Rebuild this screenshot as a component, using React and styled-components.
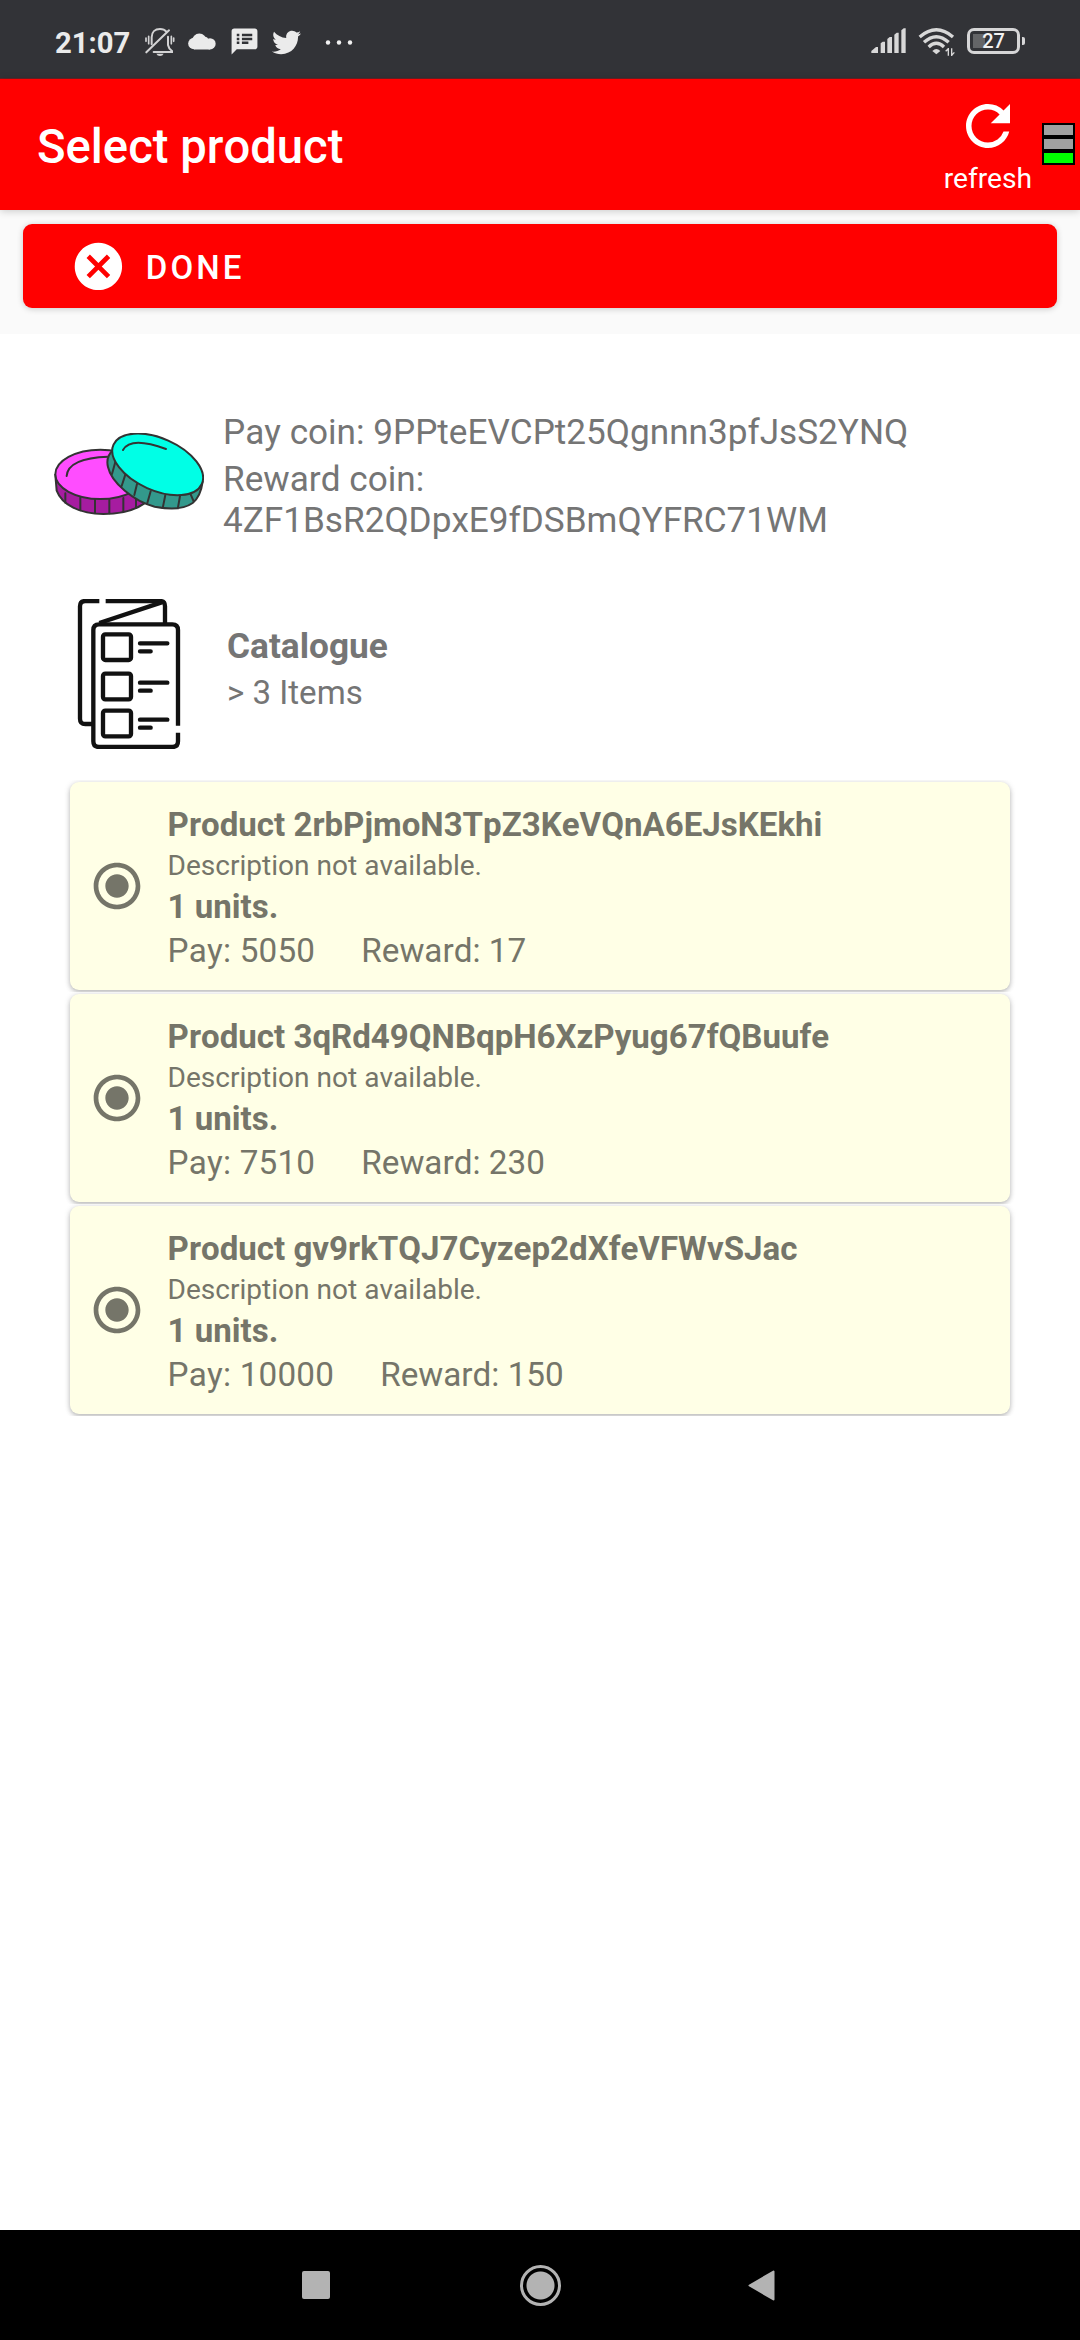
import React from "react";
import styled, { createGlobalStyle } from "styled-components";
import { MdRefresh, MdCancel, MdSpeakerNotes, MdRadioButtonChecked } from "react-icons/md";
import { FaTwitter } from "react-icons/fa";

const GlobalStyle = createGlobalStyle`
  * { box-sizing: border-box; }
  body { margin: 0; background: #fff; font-family: Roboto, "Liberation Sans", sans-serif; font-kerning: none; }
  svg { display: block; flex: none; }
`;

const Screen = styled.div`
  display: flex;
  flex-direction: column;
  width: 1080px;
  height: 2340px;
  overflow: hidden;
  background: #fff;
`;

/* ---------- status bar ---------- */

const StatusBar = styled.header`
  display: flex;
  justify-content: space-between;
  height: 79px;
  padding: 26px 40px 0 55px;
  background: linear-gradient(#323337 78px, #6a2226 78px);
  color: #ebebeb;
`;

const StatusGroup = styled.div`
  display: flex;
  align-items: flex-start;
`;

const Clock = styled.span`
  width: 88px;
  font-size: 29.25px;
  font-weight: 700;
  line-height: 34px;
`;

const StatusIcon = styled.span`
  display: flex;
  justify-content: ${(p) => p.$align || "center"};
  width: ${(p) => p.$width}px;
  padding-top: ${(p) => p.$top || 0}px;
`;

const TwitterMark = styled(FaTwitter)`
  width: 29px;
  height: 29px;
`;

const Battery = styled.div`
  position: relative;
  display: flex;
  align-items: center;
  justify-content: center;
  width: 53px;
  height: 26px;
  margin: 2px 0 0 12px;
  border: 3px solid #d6d6d7;
  border-radius: 7px;
  color: #f2f2f2;
  font-size: 20px;
  font-weight: 500;
  line-height: 20px;
  background: linear-gradient(#646567, #646567) 3px 3px / 12px 14px no-repeat;

  &::after {
    content: "";
    position: absolute;
    right: -8px;
    top: 6px;
    width: 3px;
    height: 8px;
    border-radius: 0 2px 2px 0;
    background: #d6d6d7;
  }
`;

/* ---------- app bar ---------- */

const AppBar = styled.div`
  position: relative;
  z-index: 1;
  display: flex;
  align-items: flex-start;
  height: 131px;
  padding: 0 5px 0 37px;
  background: #ff0000;
  color: #fff;
  box-shadow: 0 1px 8px rgba(0, 0, 0, 0.2);
`;

const Title = styled.h1`
  flex: 1;
  margin: 40px 0 0;
  font-size: 47.2px;
  font-weight: 500;
  line-height: 56px;
`;

const RefreshAction = styled.button`
  display: flex;
  flex-direction: column;
  align-items: center;
  gap: 3px;
  margin: 14px 10px 0 0;
  padding: 0;
  border: 0;
  background: none;
  color: #fff;
  font-family: inherit;
  font-size: 28.2px;
  line-height: 33px;
`;

const LevelMeter = styled.div`
  display: flex;
  flex-direction: column;
  gap: 4px;
  width: 33px;
  height: 42px;
  margin-top: 44px;
  padding: 2px;
  background: #000;
`;

const LevelCell = styled.span`
  flex: 1;
  background: ${(p) => (p.$on ? "#00ff00" : "#a0a0a0")};
`;

/* ---------- done button ---------- */

const ActionArea = styled.div`
  height: 124px;
  padding: 14px 23px 0;
  background: #fafafa;
`;

const DoneButton = styled.button`
  display: flex;
  align-items: center;
  gap: 19px;
  width: 100%;
  height: 84px;
  padding: 0 47px;
  border: 0;
  border-radius: 9px;
  background: #ff0000;
  color: #fff;
  font-family: inherit;
  font-size: 33px;
  font-weight: 500;
  letter-spacing: 3.1px;
  line-height: 39px;
  box-shadow: 0 1px 6px rgba(0, 0, 0, 0.2);
`;

const DoneLabel = styled.span`
  padding-top: 3px;
`;

/* ---------- content ---------- */

const Content = styled.main`
  flex: 1;
  color: #757575;
`;

const InfoRow = styled.section`
  display: flex;
  align-items: flex-start;
  padding: ${(p) => p.$padding};
  gap: ${(p) => p.$gap}px;
`;

const InfoText = styled.div`
  display: flex;
  flex-direction: column;
  flex: 1;
  gap: 6px;
  padding-top: ${(p) => p.$top || 0}px;
`;

const InfoLine = styled.p`
  margin: 0;
  font-size: 35.15px;
  line-height: 41px;
`;

const CatalogueTitle = styled.h2`
  margin: 0;
  font-size: 35.25px;
  font-weight: 700;
  line-height: 41px;
`;

const ItemCount = styled.p`
  margin: 0;
  font-size: 33.1px;
  line-height: 39px;
`;

const CoinArt = styled.svg`
  margin-top: 21px;
`;

/* ---------- product list ---------- */

const ProductList = styled.ul`
  margin: 31px 0 0;
  padding: 0;
  list-style: none;
`;

const ProductItem = styled.li`
  padding: 2px 70px;
  overflow: hidden;
`;

const ProductCard = styled.article`
  display: flex;
  align-items: flex-start;
  gap: 22.6px;
  height: 208px;
  padding: 23px 19px 0;
  border-radius: 9px;
  background: #ffffe6;
  color: #757569;
  box-shadow: 0 2px 5px rgba(0, 0, 0, 0.27), 0 0 8px rgba(0, 0, 0, 0.06);
`;

const Radio = styled(MdRadioButtonChecked)`
  width: 56px;
  height: 56px;
  margin-top: 53px;
`;

const ProductBody = styled.div`
  display: flex;
  flex-direction: column;
  gap: 5px;
  font-size: 33.07px;
  line-height: 39px;
`;

const ProductName = styled.h3`
  margin: 0;
  font-size: inherit;
  font-weight: 700;
`;

const Description = styled.p`
  margin: 0;
  font-size: 28.05px;
  line-height: 33px;
`;

const Units = styled.p`
  margin: 0;
  font-weight: 700;
`;

const Prices = styled.div`
  display: flex;
  gap: 46px;
  font-size: 33.25px;
`;

const Price = styled.span`
  letter-spacing: ${(p) => p.$spacing || 0}px;
`;

/* ---------- navigation bar ---------- */

const NavBar = styled.nav`
  display: flex;
  align-items: center;
  height: 110px;
  padding-left: 302px;
  background: #000;
`;

const RecentsKey = styled.span`
  width: 28px;
  height: 28px;
  border-radius: 2px;
  background: #b3b3b3;
`;

const HomeKey = styled.span`
  display: flex;
  width: 41px;
  height: 41px;
  margin: 1px 187px 0 190px;
  padding: 3.5px;
  border: 3px solid #b3b3b3;
  border-radius: 50%;
  background: radial-gradient(circle, #b3b3b3 13.5px, transparent 14.5px);
`;

const BellOffIcon = () => (
  <svg width="30" height="30" viewBox="314 81 90 90" fill="none" stroke="#d3d3d4" strokeWidth="6" strokeLinecap="round">
    <path d="M334 133V112C334 96 344 87 359 87C367 87 374 90 378 95" />
    <path d="M386 91L318 157" />
    <path d="M383 110V135Q385 146 395 153V156H340" />
    <path d="M348 161H370Q367 168 359 168Q351 168 348 161Z" fill="#d3d3d4" stroke="none" />
    <path d="M317 114V124M325 109V131M393 109V131M400 114V124" strokeWidth="5" />
  </svg>
);

const CloudIcon = () => (
  <svg width="28" height="17" viewBox="445 98 84 50" fill="#ebebeb">
    <circle cx="479" cy="121" r="22" />
    <circle cx="463" cy="129" r="17.5" />
    <circle cx="511" cy="130" r="17" />
    <circle cx="495" cy="120" r="11" />
    <rect x="463" y="124" width="48" height="23" />
  </svg>
);

const MoreIcon = () => (
  <svg width="28" height="5" viewBox="0 0 28 5" fill="#f2f2f2">
    <circle cx="3" cy="2.5" r="2.2" />
    <circle cx="14" cy="2.5" r="2.2" />
    <circle cx="25" cy="2.5" r="2.2" />
  </svg>
);

const SignalIcon = () => (
  <svg width="35" height="30" viewBox="92 78 105 90" fill="#d8d8d8">
    <path d="M93 159V153L107 141H113V159Z" />
    <path d="M121 159V130L127 125H134V159Z" />
    <path d="M141 159V117L148 111H155V159Z" />
    <path d="M162 159V104L169 98H175V159Z" />
    <path d="M183 159V91L190 85H196V159Z" />
  </svg>
);

const WifiIcon = () => (
  <svg width="37" height="31" viewBox="235 78 111 93" fill="none" stroke="#d8d8d8" strokeWidth="10">
    <path d="M240 111Q290 68 340 111" />
    <path d="M253 127Q290 93 327 127" />
    <path d="M267 141Q290 119 313 141" />
    <path d="M278 153Q290 141 302 153L290 163Z" fill="#d8d8d8" stroke="none" />
    <path d="M326 144V167M326 146L318 154M336 145V168M336 166L344 157" strokeWidth="4" />
  </svg>
);

const Coins = () => (
  <CoinArt width="150" height="82" viewBox="42 99 450 246" stroke="#333" strokeWidth="6" strokeLinecap="round">
    <path d="M46 225L50 272C66 315 120 342 190 342C240 342 285 330 312 311V225Z" fill="#a61ca0" />
    <path d="M76 280V308M121 293V331M165 299V339M208 299V340M250 294V334M288 283V323" fill="none" />
    <ellipse cx="181" cy="223" rx="135" ry="74" fill="#ff4dff" />
    <path d="M80 228Q84 174 205 170" fill="none" />
    <path d="M219 150C203 165 200 185 204 201C214 248 282 305 344 320C390 329 434 326 458 309C472 298 484 274 488 245L400 190Z" fill="#33998c" />
    <path d="M226 186L216 222M256 224L245 258M291 252L283 285M332 274L322 309M376 285L369 320M420 288L414 322M452 283L461 304" fill="none" />
    <ellipse cx="353" cy="193" rx="145" ry="78" transform="rotate(24 353 193)" fill="#00ffe6" />
    <path d="M249 150Q272 108 378 147" fill="none" />
  </CoinArt>
);

const CATALOGUE_ROWS = [163, 281, 392];

const CatalogueIcon = () => (
  <svg width="150" height="150" viewBox="12 57 450 450" fill="none" stroke="#111" strokeWidth="13">
    <path d="M148 63H106Q90 63 90 79V416Q90 432 106 432H128" />
    <path d="M167 63H330Q345 63 345 79V130" />
    <path d="M335 67L148 129" />
    <path d="M384 437V150Q384 133 367 133H147Q130 133 130 150V484Q130 501 147 501H367Q384 501 384 484V458" />
    {CATALOGUE_ROWS.map((y) => (
      <g key={y}>
        <rect x="159" y={y} width="84" height="77" rx="7" />
        <path d={`M270 ${y + 27}H352M270 ${y + 51}H302`} strokeLinecap="round" />
      </g>
    ))}
  </svg>
);

const BackIcon = () => (
  <svg width="27" height="31" viewBox="0 0 27 31" fill="#b3b3b3" stroke="#b3b3b3" strokeWidth="2" strokeLinejoin="round">
    <path d="M1.5 15.5L25.5 1.5V29.5Z" />
  </svg>
);

const products = [
  { id: "2rbPjmoN3TpZ3KeVQnA6EJsKEkhi", units: 1, pay: 5050, reward: 17 },
  { id: "3qRd49QNBqpH6XzPyug67fQBuufe", units: 1, pay: 7510, reward: 230 },
  { id: "gv9rkTQJ7Cyzep2dXfeVFWvSJac", units: 1, pay: 10000, reward: 150 },
];

export default function App() {
  return (
    <>
      <GlobalStyle />
      <Screen>
        <StatusBar>
          <StatusGroup>
            <Clock>21:07</Clock>
            <StatusIcon $width={34} $top={1}><BellOffIcon /></StatusIcon>
            <StatusIcon $width={50} $top={7}><CloudIcon /></StatusIcon>
            <StatusIcon $width={34} $top={0}><MdSpeakerNotes size={31} /></StatusIcon>
            <StatusIcon $width={51} $top={1.5}><TwitterMark /></StatusIcon>
            <StatusIcon $width={54} $top={13.5}><MoreIcon /></StatusIcon>
          </StatusGroup>
          <StatusGroup>
            <StatusIcon $width={47.5} $align="flex-start"><SignalIcon /></StatusIcon>
            <StatusIcon $width={37}><WifiIcon /></StatusIcon>
            <Battery>27</Battery>
            <StatusIcon $width={20} />
          </StatusGroup>
        </StatusBar>

        <AppBar>
          <Title>Select product</Title>
          <RefreshAction>
            <MdRefresh size={66} />
            refresh
          </RefreshAction>
          <LevelMeter>
            <LevelCell />
            <LevelCell />
            <LevelCell $on />
          </LevelMeter>
        </AppBar>

        <ActionArea>
          <DoneButton>
            <MdCancel size={56.8} />
            <DoneLabel>DONE</DoneLabel>
          </DoneButton>
        </ActionArea>

        <Content>
          <InfoRow $padding="78px 70px 0 54px" $gap={19}>
            <Coins />
            <InfoText>
              <InfoLine>Pay coin: 9PPteEVCPt25Qgnnn3pfJsS2YNQ</InfoLine>
              <InfoLine>Reward coin: 4ZF1BsR2QDpxE9fDSBmQYFRC71WM</InfoLine>
            </InfoText>
          </InfoRow>

          <InfoRow $padding="58px 70px 0 54px" $gap={23}>
            <CatalogueIcon />
            <InfoText $top={27}>
              <CatalogueTitle>Catalogue</CatalogueTitle>
              <ItemCount>&gt; 3 Items</ItemCount>
            </InfoText>
          </InfoRow>

          <ProductList>
            {products.map((product) => (
              <ProductItem key={product.id}>
                <ProductCard>
                  <Radio />
                  <ProductBody>
                    <ProductName>Product {product.id}</ProductName>
                    <Description>Description not available.</Description>
                    <Units>{product.units} units.</Units>
                    <Prices>
                      <Price $spacing={0.2}>Pay: {product.pay}</Price>
                      <Price>Reward: {product.reward}</Price>
                    </Prices>
                  </ProductBody>
                </ProductCard>
              </ProductItem>
            ))}
          </ProductList>
        </Content>

        <NavBar>
          <RecentsKey />
          <HomeKey />
          <BackIcon />
        </NavBar>
      </Screen>
    </>
  );
}
